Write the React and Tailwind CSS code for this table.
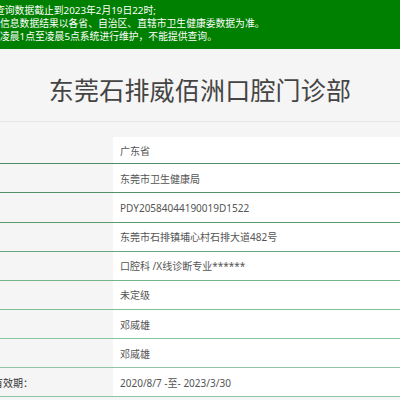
import React from "react";

const FONT = { fontFamily: '"Noto Sans", "Noto Sans CJK SC", sans-serif' };

const rows = [
  { value: "广东省", h: "h-[27px]", line: "border-[#4f8d62]" },
  { value: "东莞市卫生健康局", h: "h-[29.3px]", line: "border-[#548f67]" },
  { value: "PDY20584044190019D1522", h: "h-[29.5px]", line: "border-[#5c9a6f]" },
  { value: "东莞市石排镇埔心村石排大道482号", h: "h-[29.3px]", line: "border-[#67a67b]" },
  { value: "口腔科 /X线诊断专业******", h: "h-[28.5px]", line: "border-[#76b389]" },
  { value: "未定级", h: "h-[29.5px]", line: "border-[#82bd96]" },
  { value: "邓威雄", h: "h-[29.3px]", line: "border-[#8ac3a0]" },
  { value: "邓威雄", h: "h-[29px]", line: "border-[#8fc7a5]" },
  { value: "2020/8/7 -至- 2023/3/30", h: "h-[28.5px]", line: "border-[#8fc7a5]", label: "有效期：" },
];

export default function App() {
  return (
    <div className="w-[400px] h-[400px] overflow-hidden bg-[#f5f5f5]" style={FONT}>
      {/* 顶部提示 */}
      <div className="h-[49px] bg-[#008000] pt-[4px] text-[9.8px] leading-[13.2px] text-white whitespace-nowrap">
        <div className="ml-[-5px]">查询数据截止到2023年2月19日22时;</div>
        <div>信息数据结果以各省、自治区、直辖市卫生健康委数据为准。</div>
        <div>凌晨1点至凌晨5点系统进行维护，不能提供查询。</div>
      </div>

      <div className="h-[73px] border-b border-[#e6e6e6] flex items-center justify-center pt-[12px]">
        <h1 className="text-[25px] text-[#444] tracking-[0.2px]">东莞石排威佰洲口腔门诊部</h1>
      </div>

      <div className="mt-[15px]">
        {rows.map((r, i) => (
          <div key={i} className={`flex border-b ${r.line} ${r.h}`}>
            <div className="w-[113px] flex items-center pt-[2px] text-[10px] text-[#333] whitespace-nowrap">
              {r.label && <span className="ml-[-7px]">{r.label}</span>}
            </div>
            <div className="flex-1 bg-white flex items-center pl-[7px] pt-[2px] text-[10px] text-[#555] whitespace-nowrap">
              {r.value}
            </div>
          </div>
        ))}
      </div>
    </div>
  );
}
